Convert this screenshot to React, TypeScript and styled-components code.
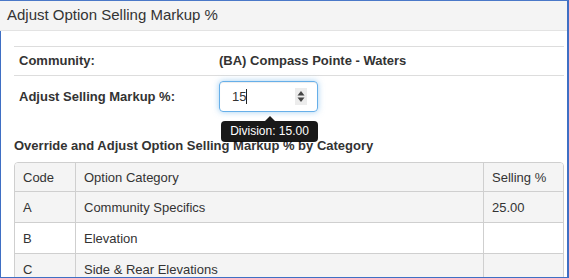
import React from "react";
import styled, { createGlobalStyle } from "styled-components";

const Global = createGlobalStyle`
  html, body { margin: 0; padding: 0; background: #fff; }
  body { font-family: "Liberation Sans", Arial, sans-serif; color: #333; }
  * { box-sizing: border-box; }
`;

const Frame = styled.div`
  width: 569px;
  height: 278px;
  border-top: 1px solid #4a78c8;
  border-right: 2px solid #3f6fc4;
  border-bottom: 1px solid #3f6fc4;
  display: flex;
  flex-direction: column;
  overflow: hidden;
  background: #fff;
`;

const Header = styled.div`
  height: 30px;
  flex: none;
  background: #f4f4f4;
  border-bottom: 1px solid #e3e3e3;
  padding: 4px 0 0 7px;
  font-size: 15px;
  line-height: 20px;
  color: #333;
`;

const Body = styled.div`
  flex: 1;
  border-left: 1px solid #3f6fc4;
  padding: 15px 0 0 13px;
  overflow: hidden;
  position: relative;
`;

const Content = styled.div`
  width: 550px;
`;

const FormRow = styled.div`
  display: grid;
  grid-template-columns: 200px 1fr;
  border-top: 1px solid #dddddd;
  padding: 5px 0;
  font-size: 13px;
  line-height: 18px;
  font-weight: bold;
  align-items: center;
`;

const Cell = styled.div`
  padding: 0 5px;
  position: relative;
`;

const InputBox = styled.div`
  width: 99px;
  height: 31px;
  border: 1px solid #66afe9;
  border-radius: 4px;
  box-shadow: inset 0 1px 1px rgba(0, 0, 0, 0.075), 0 0 6px rgba(102, 175, 233, 0.6);
  display: flex;
  align-items: center;
  padding: 0 0 0 12px;
  font-weight: normal;
  font-size: 13px;
  color: #333;
`;

const Value = styled.span`
  flex: 1;
  display: flex;
  align-items: center;
`;

const Caret = styled.span`
  display: inline-block;
  width: 1px;
  height: 15px;
  background: #222;
  margin-left: 0px;
`;

const Spinner = styled.div`
  width: 12px;
  height: 17px;
  background: #ececec;
  margin-right: 10px;
  display: flex;
  align-items: center;
  justify-content: center;
`;

const Tooltip = styled.div`
  position: absolute;
  left: 7px;
  top: 40px;
  width: 97px;
  height: 21px;
  background: rgba(0, 0, 0, 0.9);
  color: #fff;
  font-weight: normal;
  font-size: 12px;
  line-height: 21px;
  text-align: center;
  border-radius: 4px;
  z-index: 2;
  &::before {
    content: "";
    position: absolute;
    top: -5px;
    left: 50%;
    margin-left: -5px;
    border-left: 5px solid transparent;
    border-right: 5px solid transparent;
    border-bottom: 5px solid rgba(0, 0, 0, 0.9);
  }
`;

const Heading = styled.div`
  margin-top: 20px;
  font-size: 13px;
  line-height: 18px;
  font-weight: bold;
  color: #333;
`;

const Table = styled.div`
  margin-top: 7px;
  border: 1px solid #cfcfcf;
  border-radius: 4px 4px 0 0;
  overflow: hidden;
  font-size: 13px;
  color: #333;
`;

const Row = styled.div<{ $bg: string; $h: number; $first?: boolean }>`
  display: grid;
  grid-template-columns: 61px 408px 1fr;
  height: ${(p) => p.$h}px;
  background: ${(p) => p.$bg};
  border-top: ${(p) => (p.$first ? "none" : "1px solid #cfcfcf")};
`;

const Td = styled.div<{ $last?: boolean }>`
  display: flex;
  align-items: center;
  padding: 0 8px;
  border-right: ${(p) => (p.$last ? "none" : "1px solid #cfcfcf")};
`;

const rows = [
  { code: "A", cat: "Community Specifics", pct: "25.00", bg: "#f4f4f4" },
  { code: "B", cat: "Elevation", pct: "", bg: "#ffffff" },
  { code: "C", cat: "Side & Rear Elevations", pct: "", bg: "#f4f4f4" },
];

export default function App() {
  return (
    <>
      <Global />
      <Frame>
        <Header>Adjust Option Selling Markup %</Header>
        <Body>
          <Content>
            <FormRow>
              <Cell>Community:</Cell>
              <Cell>(BA) Compass Pointe - Waters</Cell>
            </FormRow>
            <FormRow>
              <Cell>Adjust Selling Markup %:</Cell>
              <Cell>
                <InputBox>
                  <Value>
                    15
                    <Caret />
                  </Value>
                  <Spinner>
                    <svg width="8" height="13" viewBox="0 0 8 13">
                      <path d="M4 1 L7.5 5.5 H0.5 Z" fill="#444" />
                      <path d="M4 12 L7.5 7.5 H0.5 Z" fill="#444" />
                    </svg>
                  </Spinner>
                </InputBox>
                <Tooltip>Division: 15.00</Tooltip>
              </Cell>
            </FormRow>
            <Heading>Override and Adjust Option Selling Markup % by Category</Heading>
            <Table>
              <Row $bg="#f4f4f4" $h={28} $first>
                <Td>Code</Td>
                <Td>Option Category</Td>
                <Td $last>Selling %</Td>
              </Row>
              {rows.map((r) => (
                <Row key={r.code} $bg={r.bg} $h={31}>
                  <Td>{r.code}</Td>
                  <Td>{r.cat}</Td>
                  <Td $last>{r.pct}</Td>
                </Row>
              ))}
            </Table>
          </Content>
        </Body>
      </Frame>
    </>
  );
}
